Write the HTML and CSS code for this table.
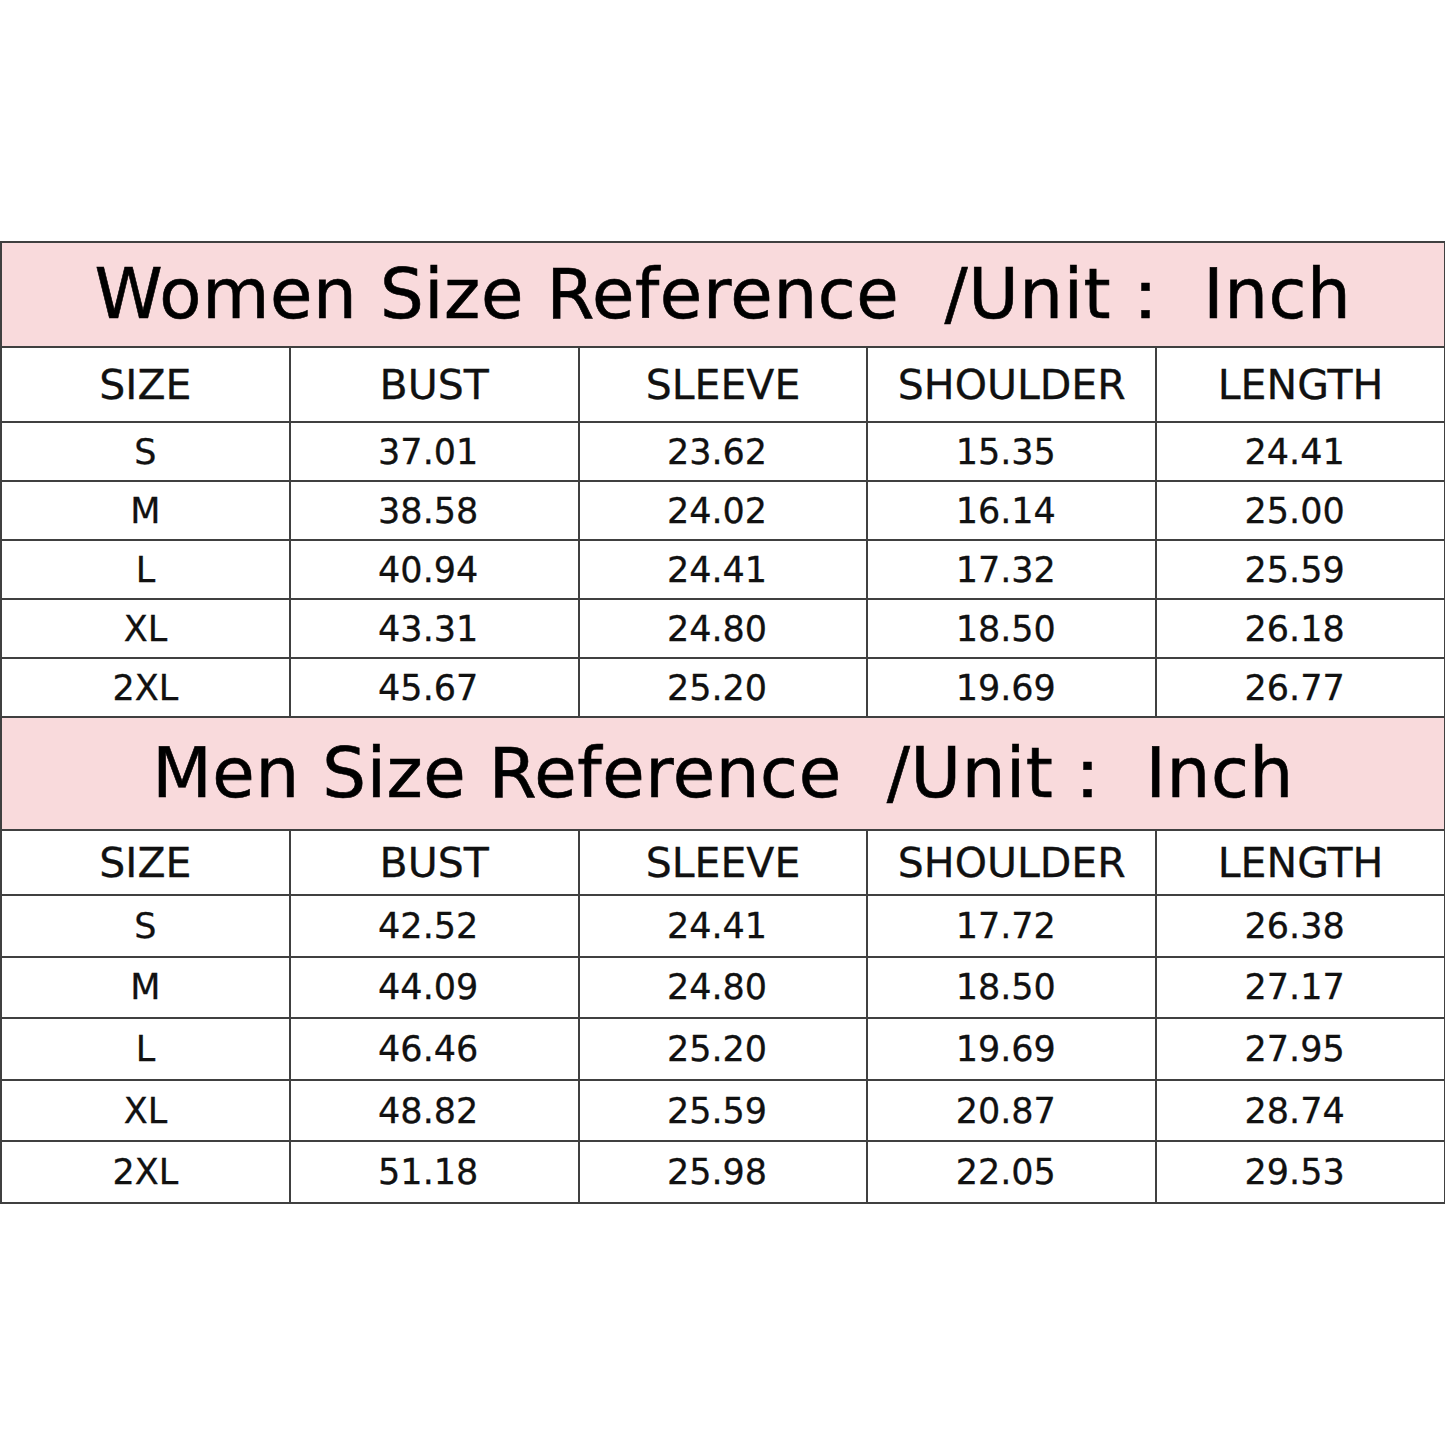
FILE: index.html
```html
<!DOCTYPE html>
<html>
<head>
<meta charset="utf-8">
<link rel="stylesheet" href="styles.css">
</head>
<body>
<main class="page">
<table class="chart">
  <colgroup><col class="c"><col class="c"><col class="c"><col class="c"><col class="c"></colgroup>
  <tbody>
    <tr class="title women-title"><td colspan="5">Women Size Reference&nbsp;&nbsp;/Unit：&nbsp;Inch</td></tr>
    <tr class="head women-head"><td>SIZE</td><td>BUST</td><td>SLEEVE</td><td>SHOULDER</td><td>LENGTH</td></tr>
    <tr class="row women-row"><td>S</td><td>37.01</td><td>23.62</td><td>15.35</td><td>24.41</td></tr>
    <tr class="row women-row"><td>M</td><td>38.58</td><td>24.02</td><td>16.14</td><td>25.00</td></tr>
    <tr class="row women-row"><td>L</td><td>40.94</td><td>24.41</td><td>17.32</td><td>25.59</td></tr>
    <tr class="row women-row"><td>XL</td><td>43.31</td><td>24.80</td><td>18.50</td><td>26.18</td></tr>
    <tr class="row women-row"><td>2XL</td><td>45.67</td><td>25.20</td><td>19.69</td><td>26.77</td></tr>
    <tr class="title men-title"><td colspan="5">Men Size Reference&nbsp;&nbsp;/Unit：&nbsp;Inch</td></tr>
    <tr class="head men-head"><td>SIZE</td><td>BUST</td><td>SLEEVE</td><td>SHOULDER</td><td>LENGTH</td></tr>
    <tr class="row men-row"><td>S</td><td>42.52</td><td>24.41</td><td>17.72</td><td>26.38</td></tr>
    <tr class="row men-row"><td>M</td><td>44.09</td><td>24.80</td><td>18.50</td><td>27.17</td></tr>
    <tr class="row men-row"><td>L</td><td>46.46</td><td>25.20</td><td>19.69</td><td>27.95</td></tr>
    <tr class="row men-row"><td>XL</td><td>48.82</td><td>25.59</td><td>20.87</td><td>28.74</td></tr>
    <tr class="row men-row"><td>2XL</td><td>51.18</td><td>25.98</td><td>22.05</td><td>29.53</td></tr>
  </tbody>
</table>
</main>
</body>
</html>
```
FILE: styles.css
```css
html, body {
  margin: 0;
  padding: 0;
  background: #ffffff;
}
.page {
  min-height: 1445px;
  display: flex;
  align-items: center;
  justify-content: flex-start;
}
.chart {
  border-collapse: collapse;
  table-layout: fixed;
  width: 1444px;
  font-family: "DejaVu Sans", "Open Sans", sans-serif;
  color: #111;
}
.c { width: 288.8px; }
.chart td {
  border: 2px solid #404040;
  text-align: center;
  vertical-align: middle;
  padding: 0;
  white-space: nowrap;
}
.title td {
  background: #f9dadc;
  font-size: 69px;
  letter-spacing: 0.6px;
  color: #000;
  -webkit-text-stroke: 0.6px #000;
}
.women-title { height: 105px; }
.men-title { height: 113px; }
.head td {
  font-size: 41px;
  -webkit-text-stroke: 0.3px #111;
}
.women-head { height: 75px; }
.men-head { height: 65px; }
.row td {
  font-size: 35px;
  -webkit-text-stroke: 0.3px #111;
}
.row td + td {
  padding-right: 12px;
}
.women-row { height: 59px; }
.men-row { height: 61.6px; }
```
